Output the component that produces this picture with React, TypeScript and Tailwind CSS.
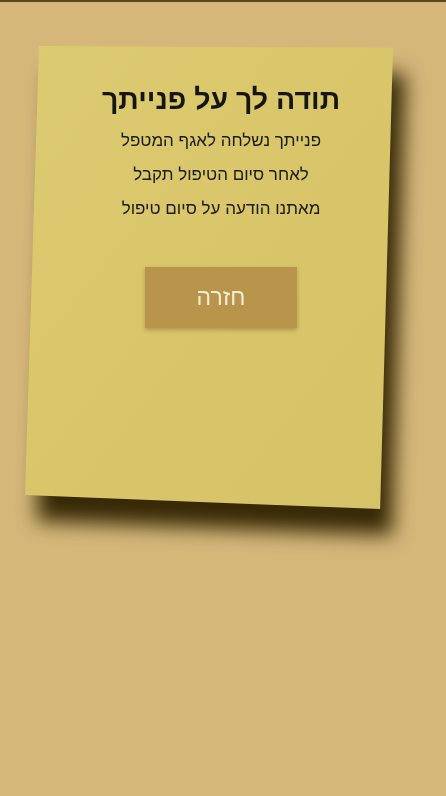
import React from 'react';

export default function App() {
  const lines = ['פנייתך נשלחה לאגף המטפל', 'לאחר סיום הטיפול תקבל', 'מאתנו הודעה על סיום טיפול'];

  return (
    <div
      dir="rtl"
      className="min-h-[796px] w-full bg-[#d5b77a] border-t-2 border-[#5b4526] overflow-hidden"
      style={{ fontFamily: '"Liberation Sans", "DejaVu Sans", sans-serif' }}
    >
      {/* Sticky note */}
      <div className="mt-[44px] ml-[25px] mr-[53px] h-[463px] [filter:drop-shadow(12px_26px_10px_rgba(50,36,2,0.97))]">
        <div className="h-full bg-gradient-to-br from-[#ddcb72] via-[#d9c66a] to-[#d6c267] [clip-path:polygon(3.8%_0,100%_0.4%,96.5%_100%,0_97%)] flex flex-col items-center pt-[35px] pl-6">
          <h1 className="text-[28.5px] leading-[36px] font-bold text-[#161510]">תודה לך על פנייתך</h1>
          <div className="mt-[14px] flex flex-col items-center gap-[15px]">
            {lines.map((line) => (
              <p key={line} className="text-[17px] leading-[19px] text-[#1c1a14]">
                {line}
              </p>
            ))}
          </div>
          <button className="mt-[49px] w-[152px] h-[61px] bg-[#b9944b] text-[#f5edd5] text-[23px] shadow-[0_2px_4px_rgba(90,70,20,0.35)]">
            חזרה
          </button>
        </div>
      </div>
    </div>
  );
}
